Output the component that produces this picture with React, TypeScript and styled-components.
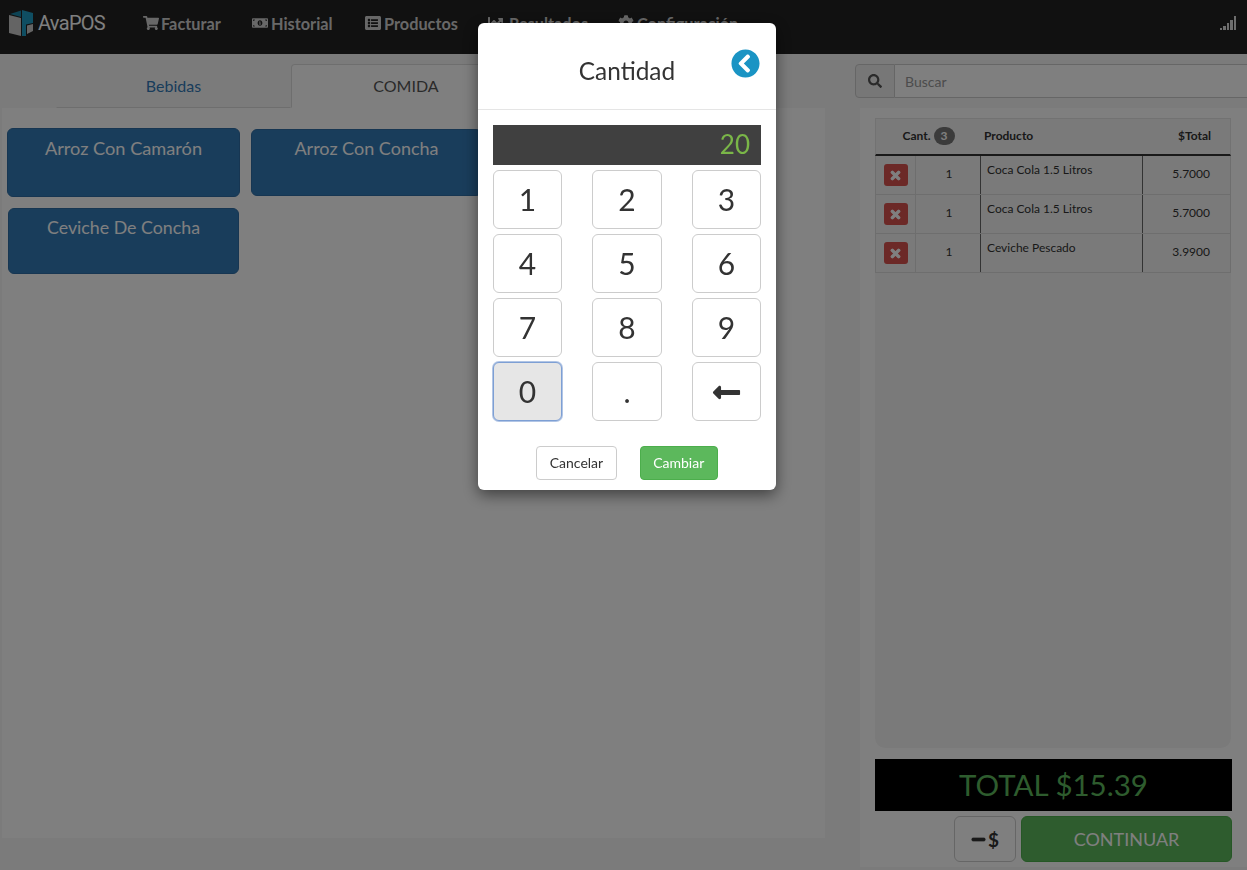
import React from "react";
import styled, { createGlobalStyle } from "styled-components";
import {
  FaShoppingCart,
  FaMoneyBillAlt,
  FaListAlt,
  FaChartLine,
  FaCog,
  FaSearch,
  FaTimes,
  FaChevronCircleLeft,
  FaLongArrowAltLeft,
  FaMinus,
} from "react-icons/fa";

const GlobalStyle = createGlobalStyle`
  html, body {
    margin: 0;
    padding: 0;
    height: 100%;
    overflow: hidden;
    background: #f7f7f7;
    font-family: Lato, "Liberation Sans", sans-serif;
    color: #333;
  }
  * {
    box-sizing: border-box;
  }
`;

const Page = styled.div`
  height: 870px;
  display: flex;
  flex-direction: column;
`;

const Navbar = styled.div`
  height: 54px;
  background: #222;
  display: flex;
  align-items: center;
  padding: 0 11px 8px 9px;
  flex-shrink: 0;
`;

const Brand = styled.div`
  display: flex;
  align-items: center;
  gap: 4px;
  width: 134px;
  font-family: Roboto, "Liberation Sans", sans-serif;
  font-size: 20px;
  letter-spacing: -0.7px;
  color: #fff;
`;

const NavItem = styled.div<{ $width: number; $gap?: number }>`
  display: flex;
  align-items: center;
  gap: ${(p) => p.$gap ?? 3}px;
  width: ${(p) => p.$width}px;
  font-size: 16.3px;
  font-weight: 700;
  color: #d0d0d0;
  svg {
    font-size: 16px;
    flex-shrink: 0;
  }
`;

const SignalBars = styled.div`
  margin-left: auto;
  display: flex;
  align-items: flex-end;
  gap: 1px;
  height: 14px;
`;

const Bar = styled.span<{ $h: number }>`
  width: 2.4px;
  height: ${(p) => p.$h}px;
  background: #ddd;
`;

const Main = styled.div`
  flex: 1;
  display: flex;
  min-height: 0;
`;

const LeftColumn = styled.div`
  width: 855px;
  padding: 10px 30px 32px 2px;
  display: flex;
  flex-direction: column;
`;

const Tabs = styled.div`
  height: 44px;
  display: flex;
  padding-left: 54px;
  flex-shrink: 0;
`;

const Tab = styled.div<{ $active?: boolean }>`
  width: ${(p) => (p.$active ? 230 : 235)}px;
  display: flex;
  align-items: center;
  justify-content: center;
  padding-bottom: 2px;
  font-size: 16px;
  color: ${(p) => (p.$active ? "#555" : "#337ab7")};
  background: ${(p) => (p.$active ? "#fff" : "transparent")};
  border: 1px solid ${(p) => (p.$active ? "#ddd" : "transparent")};
  border-bottom: ${(p) => (p.$active ? "1px solid #fff" : "1px solid #ddd")};
  border-radius: 4px 4px 0 0;
`;

const Pane = styled.div`
  flex: 1;
  background: #fff;
  padding: 20px 5px;
  display: grid;
  grid-template-columns: repeat(3, 233px);
  grid-auto-rows: min-content;
  column-gap: 11px;
  row-gap: 10px;
`;

const ProductButton = styled.div<{
  $h: number;
  $margin?: string;
  $size?: number;
  $pad?: number;
}>`
  height: ${(p) => p.$h}px;
  margin: ${(p) => p.$margin ?? "0"};
  background: #337ab7;
  border: 1px solid #2e6da4;
  border-radius: 6px;
  color: #fff;
  font-size: ${(p) => p.$size ?? 18}px;
  line-height: 24px;
  padding-top: ${(p) => p.$pad ?? 6}px;
  text-align: center;
`;

const RightColumn = styled.div`
  flex: 1;
  min-width: 0;
  padding-top: 10px;
  display: flex;
  flex-direction: column;
`;

const SearchGroup = styled.div`
  height: 34px;
  display: flex;
  flex-shrink: 0;
  margin-right: -4px;
`;

const SearchAddon = styled.div`
  width: 40px;
  display: flex;
  align-items: center;
  justify-content: center;
  background: #eee;
  border: 1px solid #ccc;
  border-radius: 4px 0 0 4px;
  color: #555;
  font-size: 14px;
`;

const SearchField = styled.div`
  flex: 1;
  display: flex;
  align-items: center;
  padding: 1px 0 0 10px;
  background: #fff;
  border: 1px solid #ccc;
  border-left: 0;
  font-size: 14px;
  color: #999;
`;

const Panel = styled.div`
  height: 759px;
  margin: 10px 0 0 5px;
  padding: 10px 15px 5px;
  background: #fff;
  display: flex;
  flex-direction: column;
`;

const TableWrap = styled.div`
  height: 630px;
  background: #f5f5f5;
  border-radius: 0 0 10px 10px;
  flex-shrink: 0;
  margin-right: 1px;
`;

const Row = styled.div`
  display: grid;
  grid-template-columns: 41px 65px 162px 88px;
  height: 39px;
  border-bottom: 1px solid #ddd;
  font-size: 12px;
  color: #333;
`;

const HeaderRow = styled(Row)`
  height: 38px;
  border: 1px solid #e4e4e4;
  border-bottom: 2px solid #333;
  font-weight: 700;
  align-items: center;
  padding-bottom: 2px;
`;

const HeaderQty = styled.div`
  grid-column: 1 / span 2;
  display: flex;
  align-items: center;
  justify-content: center;
  gap: 3px;
  padding-right: 1px;
`;

const CountBadge = styled.span`
  width: 21px;
  height: 18px;
  border-radius: 9px;
  background: #777;
  color: #fff;
  display: flex;
  align-items: center;
  justify-content: center;
  font-size: 12px;
`;

const HeaderName = styled.div`
  padding-left: 2px;
`;

const HeaderTotal = styled.div`
  text-align: right;
  padding-right: 21px;
`;

const DeleteCell = styled.div`
  border-left: 1px solid #ddd;
  border-right: 1px solid #ddd;
  display: flex;
  align-items: center;
  justify-content: center;
`;

const DeleteButton = styled.div`
  width: 24px;
  height: 22px;
  background: #d9534f;
  border-radius: 3px;
  color: #fff;
  display: flex;
  align-items: center;
  justify-content: center;
  font-size: 13px;
  svg {
    stroke: currentColor;
    stroke-width: 40;
  }
`;

const QtyCell = styled.div`
  border-right: 1px solid #666;
  text-align: center;
  line-height: 36px;
  padding-left: 2px;
  color: #333;
`;

const NameCell = styled.div`
  border-right: 1px solid #666;
  padding: 7px 0 0 6px;
  line-height: 14px;
`;

const TotalCell = styled.div`
  border-right: 1px solid #ddd;
  text-align: right;
  line-height: 36px;
  padding-right: 20px;
`;

const TotalBar = styled.div`
  height: 52px;
  margin-top: 11px;
  background: #000;
  color: #5cb85c;
  font-size: 29.5px;
  line-height: 52px;
  text-align: center;
  flex-shrink: 0;
`;

const Actions = styled.div`
  display: flex;
  justify-content: flex-end;
  gap: 5px;
  margin-top: 5px;
`;

const DiscountButton = styled.div`
  width: 62px;
  height: 46px;
  display: flex;
  align-items: center;
  justify-content: center;
  background: #fff;
  border: 1px solid #ccc;
  border-radius: 6px;
  color: #333;
  font-size: 19px;
  font-weight: 700;
  svg {
    font-size: 15px;
    margin-right: 2px;
    stroke: currentColor;
    stroke-width: 30;
  }
`;

const ContinueButton = styled.div`
  width: 211px;
  height: 46px;
  display: flex;
  align-items: center;
  justify-content: center;
  background: #5cb85c;
  border: 1px solid #4cae4c;
  border-radius: 6px;
  color: #fff;
  font-size: 18px;
`;

const Backdrop = styled.div`
  position: fixed;
  inset: 0;
  background: rgba(0, 0, 0, 0.5);
`;

const Modal = styled.div`
  position: fixed;
  top: 23px;
  left: 478px;
  width: 298px;
  height: 467px;
  background: #fff;
  border-radius: 6px;
  box-shadow: 0 5px 15px rgba(0, 0, 0, 0.5);
  display: flex;
  flex-direction: column;
`;

const ModalHeader = styled.div`
  height: 87px;
  position: relative;
  border-bottom: 1px solid #e5e5e5;
  display: flex;
  align-items: center;
  justify-content: center;
  padding-top: 9px;
  font-size: 24.4px;
  color: #333;
`;

const BackIcon = styled.div`
  position: absolute;
  top: 26px;
  right: 16px;
  width: 29px;
  height: 29px;
  display: flex;
  color: #1a94c4;
  font-size: 29px;
`;

const ModalBody = styled.div`
  padding: 15px 15px 0;
`;

const Display = styled.div`
  height: 40px;
  background: #404040;
  color: #7ab648;
  font-size: 26px;
  line-height: 38px;
  text-align: right;
  padding-right: 11px;
`;

const Keypad = styled.div`
  margin-top: 5px;
  display: grid;
  grid-template-columns: 69px 70px 69px;
  justify-content: space-between;
  grid-auto-rows: 59px;
  row-gap: 5px;
`;

const Key = styled.div<{ $focused?: boolean }>`
  display: flex;
  align-items: center;
  justify-content: center;
  padding-bottom: 2px;
  background: ${(p) => (p.$focused ? "#e6e6e6" : "#fff")};
  border: 1px solid ${(p) => (p.$focused ? "#7d9fd4" : "#ccc")};
  box-shadow: ${(p) => (p.$focused ? "0 0 0 1px rgba(125, 159, 212, 0.6)" : "none")};
  border-radius: 6px;
  color: #333;
  font-size: 30px;
  line-height: 1;
  svg {
    font-size: 31px;
    margin-top: 4px;
  }
`;

const ModalFooter = styled.div`
  margin-top: 25px;
  display: flex;
  justify-content: center;
  gap: 23px;
`;

const FooterButton = styled.div<{ $primary?: boolean }>`
  height: 34px;
  padding: 0 12.5px 2px;
  display: flex;
  align-items: center;
  background: ${(p) => (p.$primary ? "#5cb85c" : "#fff")};
  border: 1px solid ${(p) => (p.$primary ? "#4cae4c" : "#ccc")};
  border-radius: 4px;
  color: ${(p) => (p.$primary ? "#fff" : "#333")};
  font-size: 14px;
`;

const Logo = () => (
  <svg width="25" height="26" viewBox="0 0 25 26">
    <polygon points="0,5 12,8 12,26 0,23" fill="#c8c8c8" />
    <polygon points="1,4 12,0.5 12,7" fill="#1a86a8" />
    <polygon points="13,8 13,0 24,3 24,13 17,14.5 17,26 13,26" fill="#1f9cc4" />
    <polygon points="18,15.5 24,14 24,21 18,24" fill="#c8c8c8" />
  </svg>
);

const navItems = [
  { icon: <FaShoppingCart />, label: "Facturar", width: 109, gap: 2 },
  { icon: <FaMoneyBillAlt />, label: "Historial", width: 113 },
  { icon: <FaListAlt />, label: "Productos", width: 123 },
  { icon: <FaChartLine />, label: "Resultados", width: 130, gap: 5 },
  { icon: <FaCog />, label: "Configuración", width: 130 },
];

const lines = [
  { name: "Coca Cola 1.5 Litros", total: "5.7000" },
  { name: "Coca Cola 1.5 Litros", total: "5.7000" },
  { name: "Ceviche Pescado", total: "3.9900" },
];

const keys = ["1", "2", "3", "4", "5", "6", "7", "8", "9"];

const App = () => {
  return (
    <>
      <GlobalStyle />
      <Page>
        <Navbar>
          <Brand>
            <Logo />
            AvaPOS
          </Brand>
          {navItems.map((item) => (
            <NavItem key={item.label} $width={item.width} $gap={item.gap}>
              {item.icon}
              {item.label}
            </NavItem>
          ))}
          <SignalBars>
            {[2, 4, 7, 10, 14].map((h) => (
              <Bar key={h} $h={h} />
            ))}
          </SignalBars>
        </Navbar>
        <Main>
          <LeftColumn>
            <Tabs>
              <Tab>Bebidas</Tab>
              <Tab $active>COMIDA</Tab>
            </Tabs>
            <Pane>
              <ProductButton $h={69} $size={18.2} $pad={7}>
                Arroz Con Camarón
              </ProductButton>
              <ProductButton $h={67} $margin="1px 2px 0 0">
                Arroz Con Concha
              </ProductButton>
              <ProductButton $h={67} $margin="1px 0 0 0">
                Arroz Con Pescado
              </ProductButton>
              <ProductButton $h={66} $margin="1px" $size={17.8}>
                Ceviche De Concha
              </ProductButton>
            </Pane>
          </LeftColumn>
          <RightColumn>
            <SearchGroup>
              <SearchAddon>
                <FaSearch />
              </SearchAddon>
              <SearchField>Buscar</SearchField>
            </SearchGroup>
            <Panel>
              <TableWrap>
                <HeaderRow>
                  <HeaderQty>
                    Cant. <CountBadge>3</CountBadge>
                  </HeaderQty>
                  <HeaderName>Producto</HeaderName>
                  <HeaderTotal>$Total</HeaderTotal>
                </HeaderRow>
                {lines.map((line, i) => (
                  <Row key={i}>
                    <DeleteCell>
                      <DeleteButton>
                        <FaTimes />
                      </DeleteButton>
                    </DeleteCell>
                    <QtyCell>1</QtyCell>
                    <NameCell>{line.name}</NameCell>
                    <TotalCell>{line.total}</TotalCell>
                  </Row>
                ))}
              </TableWrap>
              <TotalBar>TOTAL $15.39</TotalBar>
              <Actions>
                <DiscountButton>
                  <FaMinus />$
                </DiscountButton>
                <ContinueButton>CONTINUAR</ContinueButton>
              </Actions>
            </Panel>
          </RightColumn>
        </Main>
      </Page>
      <Backdrop />
      <Modal>
        <ModalHeader>
          Cantidad
          <BackIcon>
            <FaChevronCircleLeft />
          </BackIcon>
        </ModalHeader>
        <ModalBody>
          <Display>20</Display>
          <Keypad>
            {keys.map((k) => (
              <Key key={k}>{k}</Key>
            ))}
            <Key $focused>0</Key>
            <Key>.</Key>
            <Key>
              <FaLongArrowAltLeft />
            </Key>
          </Keypad>
          <ModalFooter>
            <FooterButton>Cancelar</FooterButton>
            <FooterButton $primary>Cambiar</FooterButton>
          </ModalFooter>
        </ModalBody>
      </Modal>
    </>
  );
};

export default App;
